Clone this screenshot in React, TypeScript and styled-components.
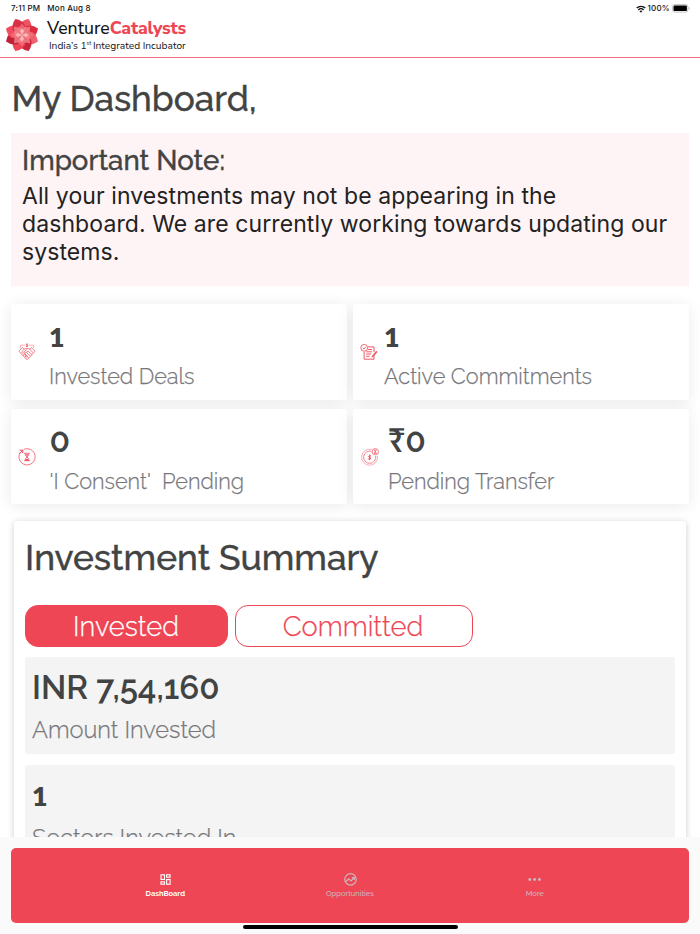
import React from "react";
import styled, { createGlobalStyle, css } from "styled-components";

const red = "#ee4654";
const ink = "#424343";
const muted = "#77777b";

const GlobalStyle = createGlobalStyle`
  *, *::before, *::after { box-sizing: border-box; }
  html, body { margin: 0; padding: 0; background: #fff; overflow: hidden; }
  svg { display: block; }
`;

const Screen = styled.div`
  width: 700px;
  height: 934px;
  display: flex;
  flex-direction: column;
  overflow: hidden;
  background: #fff;
  color: ${ink};
  font-family: "Raleway", "Lato", sans-serif;
`;

const StatusBar = styled.div`
  height: 16px;
  flex: none;
  display: flex;
  justify-content: space-between;
  padding: 3px 10px 0 11px;
  font: 500 8px/11px "Inter", sans-serif;
  letter-spacing: 0.2px;
  color: #111;
`;

const StatusGroup = styled.div<{ $gap: number }>`
  display: flex;
  align-items: center;
  gap: ${(p) => p.$gap}px;
  height: 11px;
`;

const Header = styled.header`
  height: 42px;
  flex: none;
  display: flex;
  padding-left: 4px;
  border-bottom: 1px solid #f0707c;
`;

const Brand = styled.div`
  margin-left: 7px;
  color: #161616;
  font-family: "Nunito Sans", "Lato", sans-serif;
`;

const BrandName = styled.div`
  height: 24px;
  font-size: 17.6px;
  line-height: 24px;
  font-weight: 500;
  letter-spacing: 0.02px;
  white-space: nowrap;
  b { color: ${red}; font-weight: 800; letter-spacing: -0.14px; }
`;

const Tagline = styled.div`
  margin-left: 2px;
  font-size: 10.2px;
  line-height: 12px;
  white-space: nowrap;
  sup { font-size: 5.5px; line-height: 0; vertical-align: 4px; margin-right: -0.8px; }
`;

const Content = styled.main`
  flex: 1;
  min-height: 0;
  overflow: hidden;
  padding: 0 11px;
`;

const Title = styled.h1`
  margin: 20px 0 13px;
  height: 42px;
  padding-left: 0.5px;
  font-size: 35.2px;
  line-height: 42px;
  font-weight: 500;
  -webkit-text-stroke: 0.35px ${ink};
`;

const Note = styled.section`
  height: 153px;
  padding: 10px 11px;
  background: #fff4f5;
`;

const NoteTitle = styled.h2`
  margin: 0 0 6px;
  font-size: 27.6px;
  line-height: 34px;
  height: 33px;
  font-weight: 500;
  -webkit-text-stroke: 0.35px ${ink};
`;

const NoteText = styled.p`
  margin: 0;
  font: 400 23px/28px "Inter", sans-serif;
  letter-spacing: 0.09px;
  color: #222;
  white-space: nowrap;
`;

const Stats = styled.section`
  display: grid;
  grid-template-columns: 1fr 1fr;
  gap: 9px 6px;
  margin-top: 18px;
`;

const StatCard = styled.article<{ $inset: number; $gap: number }>`
  height: 95.5px;
  display: flex;
  align-items: center;
  padding-left: ${(p) => p.$inset}px;
  gap: ${(p) => p.$gap}px;
  border-radius: 3px;
  background: #fff;
  box-shadow: 0 2px 16px rgba(0, 0, 0, 0.085);
  svg { position: relative; top: 0.5px; }
`;

const StatBody = styled.div`
  height: 100%;
  padding-top: 12px;
`;

/* Counts of one use lining figures, amounts use old-style figures. */
const lining = css`
  font-family: "Lato", sans-serif;
  font-size: 26.8px;
  font-weight: 800;
`;

const StatValue = styled.div<{ $lining?: boolean }>`
  height: 42px;
  font-size: 33.5px;
  line-height: 40px;
  font-weight: 600;
  ${(p) =>
    p.$lining &&
    css`
      ${lining}
      line-height: 42px;
    `}
`;

const StatLabel = styled.div`
  margin-top: 4px;
  font-size: 21.7px;
  line-height: 29px;
  font-weight: 300;
  -webkit-text-stroke: 0.25px ${muted};
  color: ${muted};
  white-space: pre;
`;

const Summary = styled.section`
  margin: 17px 3px 0;
  height: 420px;
  padding: 16px 11px 0;
  border-radius: 3px;
  background: #fff;
  box-shadow: 0 1px 6px rgba(0, 0, 0, 0.2);
`;

const SummaryTitle = styled.h2`
  margin: 0;
  height: 42px;
  font-size: 35.3px;
  line-height: 42px;
  font-weight: 500;
  -webkit-text-stroke: 0.4px ${ink};
`;

const Tabs = styled.div`
  display: flex;
  gap: 6.5px;
  margin-top: 26px;
`;

const Tab = styled.button<{ $active?: boolean }>`
  height: 42px;
  width: ${(p) => (p.$active ? 203 : 238)}px;
  padding: 0 1px 0 0;
  border: 1px solid ${red};
  border-radius: 13px;
  font: 300 27.3px/38px "Raleway", "Lato", sans-serif;
  -webkit-text-stroke: 0.25px currentColor;
  ${(p) =>
    p.$active
      ? css`
          background: ${red};
          color: #fff;
        `
      : css`
          background: #fff;
          color: ${red};
        `}
`;

const Metric = styled.div`
  height: 97px;
  margin-top: 11px;
  padding: 10px 7px 0;
  border-radius: 3px;
  background: #f4f4f4;
  ${Tabs} + & { margin-top: 10px; }
`;

const MetricValue = styled.div<{ $lining?: boolean }>`
  height: 42px;
  font-size: 33px;
  line-height: 42px;
  font-weight: 600;
  ${(p) => p.$lining && lining}
`;

const MetricLabel = styled.div`
  margin-top: 5px;
  font-size: 23.6px;
  line-height: 32px;
  font-weight: 300;
  -webkit-text-stroke: 0.25px ${muted};
  color: ${muted};
`;

const Footer = styled.footer`
  height: 97px;
  flex: none;
  display: flex;
  flex-direction: column;
  align-items: center;
  padding: 11px 11px 0;
  background: #fafafa;
`;

const Nav = styled.nav`
  width: 100%;
  height: 74.5px;
  display: flex;
  justify-content: center;
  border-radius: 5px;
  background: ${red};
`;

const NavItem = styled.a<{ $active?: boolean }>`
  width: 184.7px;
  display: flex;
  flex-direction: column;
  align-items: center;
  padding-top: 24px;
  font-size: 7.5px;
  line-height: 10px;
  font-weight: ${(p) => (p.$active ? 700 : 500)};
  color: ${(p) => (p.$active ? "#fff" : "#c9b9bf")};
  svg { margin-bottom: 2px; }
`;

const HomeIndicator = styled.div`
  width: 215px;
  height: 4px;
  margin-top: 2px;
  border-radius: 2px;
  background: #000;
`;

const petal = "M0 0L-6.6 -7.5Q-6.2 -13.5 0 -17.3Q6.2 -13.5 6.6 -7.5Z";
const innerPetal = "M0 0L-4 -6.4L0 -11.5L4 -6.4Z";

function Logo() {
  const fills = ["#ec5463", "#dd2c40", "#f0606e", "#c9243a", "#ee4456", "#c02136", "#f04d5e", "#d93045"];
  return (
    <svg width="36" height="38" viewBox="-18 -19 36 38">
      {fills.map((f, i) => (
        <path key={i} d={petal} fill={f} transform={`rotate(${i * 45 + 22.5})`} />
      ))}
      {fills.map((_, i) => (
        <path key={i} d={innerPetal} fill={i % 2 ? "#f68b92" : "#f3747e"} opacity="0.75" transform={`rotate(${i * 45})`} />
      ))}
      {[0, 90, 180, 270].map((a) => (
        <path key={a} d="M0 0L-2 -4L0 -7L2 -4Z" fill="#fbc9c5" opacity="0.8" transform={`rotate(${a})`} />
      ))}
    </svg>
  );
}

function WifiIcon() {
  return (
    <svg width="10" height="8" viewBox="0 0 10 8" fill="none" stroke="#111" strokeWidth="1.35">
      <path d="M.7 3.1C3.1.7 6.9.7 9.3 3.1M2.4 4.9C3.9 3.4 6.1 3.4 7.6 4.9" />
      <path d="M3.5 6.1Q5 4.9 6.5 6.1L5 7.7Z" fill="#111" stroke="none" />
    </svg>
  );
}

function BatteryIcon() {
  return (
    <svg width="18" height="9" viewBox="0 0 18 9">
      <rect x=".5" y=".5" width="15.4" height="7.6" rx="2.2" fill="#fff" stroke="#aaa" strokeWidth=".7" />
      <rect x="1.5" y="1.5" width="13.4" height="5.6" rx="1.2" fill="#000" />
      <path d="M16.7 3v2.6q.9-.3.9-1.3t-.9-1.3Z" fill="#aaa" />
    </svg>
  );
}

function HandshakeIcon() {
  return (
    <svg width="18" height="18" viewBox="0 0 18 18" fill="none" stroke={red} strokeWidth=".65" strokeLinejoin="round">
      <path d="M2.4 5V2.2H7M11 2.2h4.6V5" opacity=".65" />
      <path d="M9 .4v3.7M10 1.2H8.6q-1 .7 0 1.1h.8q1 .5 0 1.2H8" />
      <path d="M1 8.2 4.2 4.6 6.3 6 9 5.3 11.7 6l2.1-1.4L17 8.2l-1.8 2.2L9 16.8 2.8 10.4Z" />
      <path d="M6.3 6 3 9.8M11.7 6 15 9.8M9 6.2 6.3 9q1 1.4 2.7 0l1-.8 4.2 3.6M8.6 9.6l3.9 3.8M7 11l3.5 3.6M3.7 10.8l1.8-1.6 1.1 1.2-1.5 1.7M5.4 12.4l1.7-1.6 1 1.2-1.5 1.7M7 14l1.4-1.3 1 1.3-1.3 1.5" />
    </svg>
  );
}

function CommitmentsIcon() {
  return (
    <svg width="18" height="18" viewBox="0 0 18 18" fill="none" stroke={red} strokeWidth=".9">
      <circle cx="4.2" cy="4.8" r="3.4" strokeWidth=".8" />
      <path d="M2.7 4.8 3.9 6l2-2.2" />
      <path d="M8 3.9h6v5.2M4.1 8.8v7.4h9.9v-3.5" />
      <path d="M7.8 6.5H12M6.2 8.8H12M6.2 11h5M6.2 13.3h3.5" />
      <path d="m16.4 8.1-4 4.6-.7 1.6 1.6-.8 3.9-4.5Z" fill={red} strokeWidth=".4" />
    </svg>
  );
}

function HourglassIcon() {
  return (
    <svg width="18" height="18" viewBox="0 0 18 18" fill="none" stroke={red} strokeWidth=".75">
      <path d="M5.6 1.5A8.1 8.1 0 1 1 2.1 4.7" />
      <path d="M1.3 5.8 4.5 2.4M1.6 2.2h3.2v3" strokeWidth="1" />
      <path d="M6.2 5.3h5.6M6.2 12.7h5.6M7 5.5q0 2.3 2 3.5-2 1.2-2 3.5h4q0-2.3-2-3.5 2-1.2 2-3.5" />
      <path d="M7.7 6.6h2.6L9 8ZM7.6 12 9 10.5l1.4 1.5Z" fill={red} strokeWidth=".3" />
    </svg>
  );
}

function TransferIcon() {
  return (
    <svg width="18" height="18" viewBox="0 0 18 18" fill="none" stroke={red} strokeWidth=".65">
      <path d="M10.7 1.5A8 8 0 1 0 16.5 8" opacity=".65" />
      <path d="M10.6 3.4A6.1 6.1 0 1 0 14.7 8" />
      <circle cx="14.3" cy="3.7" r="3.2" />
      <path d="M13 2.1h2.6M13 5.4h2.6M13.3 2.2l2 3.1M15.3 2.2l-2 3.1" />
      <path d="M10 7.9H8.2q-1.4.8 0 1.5h.9q1.4.8 0 1.6H7.2M8.7 6.7v5.5" strokeWidth=".9" />
    </svg>
  );
}

function DashboardIcon() {
  return (
    <svg width="15" height="15" viewBox="0 0 15 15" fill="none" stroke="#fff" strokeWidth="1.1">
      <rect x="3" y="2.8" width="3.5" height="4.6" />
      <rect x="8.6" y="2.8" width="3.5" height="2.4" />
      <rect x="3" y="9.8" width="3.5" height="2.4" />
      <rect x="8.6" y="7.6" width="3.5" height="4.6" />
    </svg>
  );
}

function OpportunitiesIcon() {
  return (
    <svg width="15" height="15" viewBox="0 0 15 15" fill="none" stroke="#c9b9bf" strokeWidth="1.2">
      <circle cx="7.5" cy="7.4" r="5.7" />
      <path d="m3.2 9.5 2.6-2.6 2.2 2 3-3M8.8 5.7h2.4v2.4" />
    </svg>
  );
}

function MoreIcon() {
  return (
    <svg width="15" height="15" viewBox="0 0 15 15" fill="#c9bcc2">
      <circle cx="2.8" cy="7.5" r="1.4" />
      <circle cx="7.6" cy="7.5" r="1.4" />
      <circle cx="12.4" cy="7.5" r="1.4" />
    </svg>
  );
}

const stats = [
  { value: "1", label: "Invested Deals", icon: <HandshakeIcon />, inset: 7, gap: 13, lining: true },
  { value: "1", label: "Active Commitments", icon: <CommitmentsIcon />, inset: 6.5, gap: 6.5, lining: true },
  { value: "0", label: "'I Consent'\u00a0 Pending", icon: <HourglassIcon />, inset: 7, gap: 13.5 },
  { value: "₹0", label: "Pending Transfer", icon: <TransferIcon />, inset: 8, gap: 9 },
];

export default function App() {
  return (
    <Screen>
      <GlobalStyle />
      <StatusBar>
        <StatusGroup $gap={7}>
          <span>7:11 PM</span>
          <span>Mon Aug 8</span>
        </StatusGroup>
        <StatusGroup $gap={2}>
          <WifiIcon />
          <span>100%</span>
          <BatteryIcon />
        </StatusGroup>
      </StatusBar>
      <Header>
        <Logo />
        <Brand>
          <BrandName>
            Venture<b>Catalysts</b>
          </BrandName>
          <Tagline>
            India’s 1<sup>st</sup> Integrated Incubator
          </Tagline>
        </Brand>
      </Header>
      <Content>
        <Title>My Dashboard,</Title>
        <Note>
          <NoteTitle>Important Note:</NoteTitle>
          <NoteText>
            All your investments may not be appearing in the
            <br />
            dashboard. We are currently working towards updating our
            <br />
            systems.
          </NoteText>
        </Note>
        <Stats>
          {stats.map((s) => (
            <StatCard key={s.label} $inset={s.inset} $gap={s.gap}>
              {s.icon}
              <StatBody>
                <StatValue $lining={s.lining}>{s.value}</StatValue>
                <StatLabel>{s.label}</StatLabel>
              </StatBody>
            </StatCard>
          ))}
        </Stats>
        <Summary>
          <SummaryTitle>Investment Summary</SummaryTitle>
          <Tabs>
            <Tab $active>Invested</Tab>
            <Tab>Committed</Tab>
          </Tabs>
          <Metric>
            <MetricValue>INR 7,54,160</MetricValue>
            <MetricLabel>Amount Invested</MetricLabel>
          </Metric>
          <Metric>
            <MetricValue $lining>1</MetricValue>
            <MetricLabel>Sectors Invested In</MetricLabel>
          </Metric>
        </Summary>
      </Content>
      <Footer>
        <Nav>
          <NavItem $active>
            <DashboardIcon />
            DashBoard
          </NavItem>
          <NavItem>
            <OpportunitiesIcon />
            Opportunities
          </NavItem>
          <NavItem>
            <MoreIcon />
            More
          </NavItem>
        </Nav>
        <HomeIndicator />
      </Footer>
    </Screen>
  );
}
